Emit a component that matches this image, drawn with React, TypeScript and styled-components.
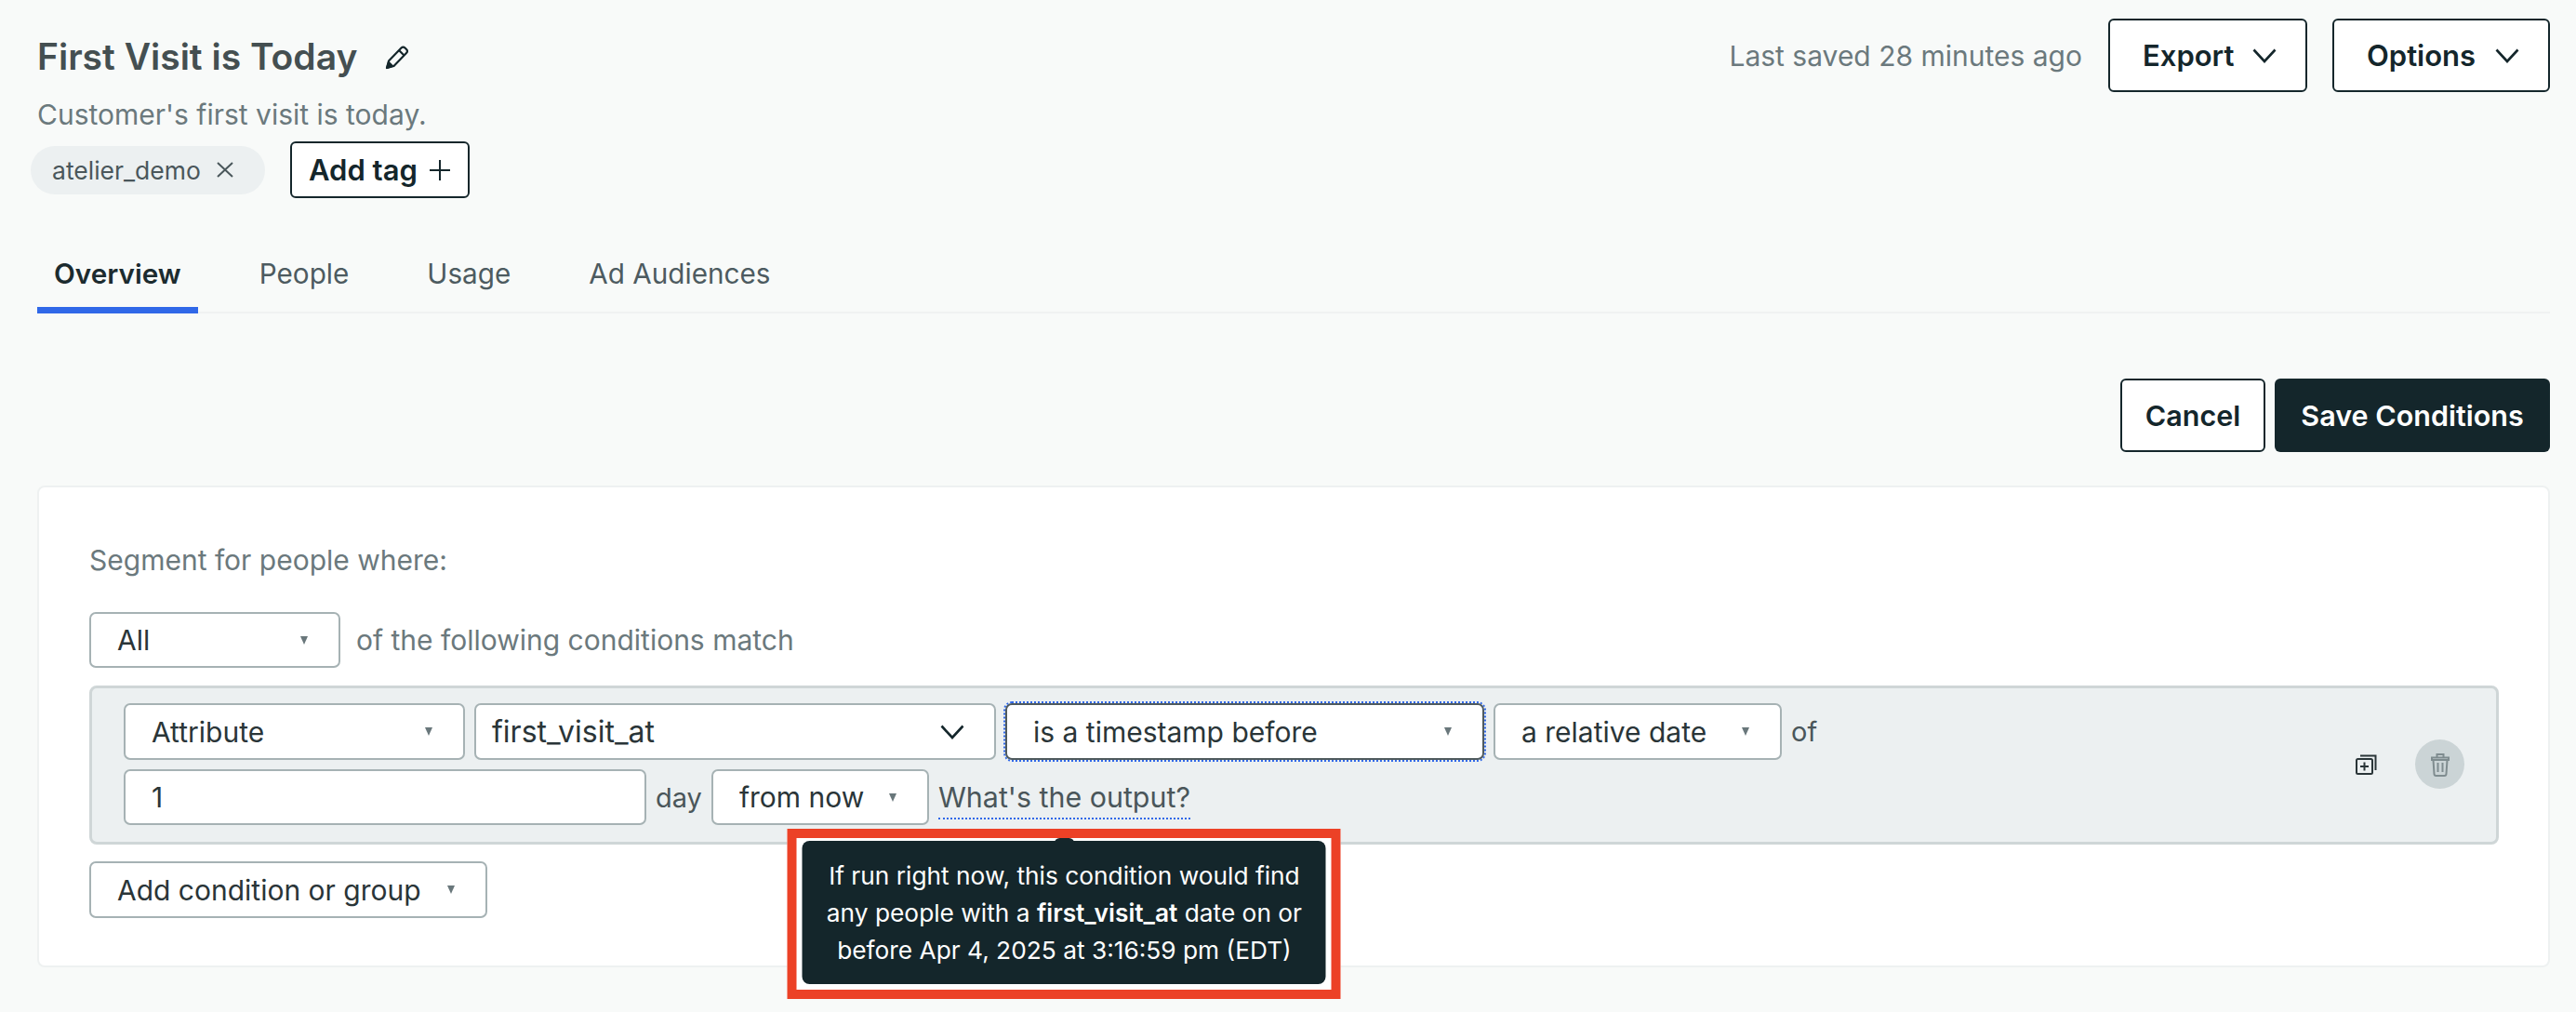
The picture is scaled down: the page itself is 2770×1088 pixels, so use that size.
import React from 'react';
import styled, { createGlobalStyle } from 'styled-components';

const GlobalStyle = createGlobalStyle`
  html, body {
    margin: 0;
    padding: 0;
    background: #f8faf9;
  }
  * {
    box-sizing: border-box;
  }
  body {
    font-family: Inter, 'Noto Sans', 'Liberation Sans', sans-serif;
    color: #2a3538;
  }
`;

const Page = styled.div`
  width: 2770px;
  height: 1088px;
  padding: 20px 28px 0 40px;
`;

const Header = styled.header`
  display: flex;
  justify-content: space-between;
  align-items: flex-start;
`;

const HeaderLeft = styled.div`
  padding-top: 16px;
`;

const TitleRow = styled.div`
  display: flex;
  align-items: center;
  gap: 30px;
  height: 50px;
`;

const Title = styled.h1`
  margin: 0;
  font-size: 39px;
  line-height: 50px;
  font-weight: 600;
  color: #444f51;
`;

const Description = styled.p`
  margin: 15px 0 0;
  font-size: 30px;
  line-height: 44px;
  color: #6b797d;
`;

const TagRow = styled.div`
  display: flex;
  align-items: center;
  gap: 27px;
  margin: 7px 0 0 -7px;
`;

const Tag = styled.span`
  display: inline-flex;
  align-items: center;
  justify-content: space-between;
  width: 252px;
  height: 52px;
  padding: 0 34px 0 23px;
  border-radius: 26px;
  background: #ecf0f1;
  font-size: 26.5px;
  color: #4a575b;
`;

const OutlineButton = styled.button<{ $w: number; $h?: number }>`
  display: inline-flex;
  align-items: center;
  justify-content: space-between;
  width: ${p => p.$w}px;
  height: ${p => p.$h ?? 79}px;
  padding: 0 31px 0 35px;
  background: #fff;
  border: 2px solid #14262b;
  border-radius: 6px;
  font-family: inherit;
  font-size: 31px;
  font-weight: 600;
  color: #14262b;
`;

const AddTag = styled(OutlineButton)`
  padding: 0 19px 0 18px;
`;

const HeaderRight = styled.div`
  display: flex;
  align-items: center;
  gap: 27px;
`;

const Saved = styled.span`
  font-size: 30px;
  color: #6b797d;
  margin-right: 1px;
`;

const Tabs = styled.nav`
  display: flex;
  gap: 48px;
  margin-top: 61px;
  border-bottom: 2px solid #f0f2f2;
`;

const Tab = styled.div<{ $active?: boolean }>`
  height: 63px;
  margin-bottom: -2px;
  padding: 0 18px;
  font-size: 29.7px;
  line-height: 40px;
  font-weight: ${p => (p.$active ? 600 : 400)};
  color: ${p => (p.$active ? '#1c2b2f' : '#4d5b60')};
  border-bottom: 7px solid ${p => (p.$active ? '#3068e8' : 'transparent')};
`;

const Actions = styled.div`
  display: flex;
  justify-content: flex-end;
  gap: 10px;
  margin-top: 70px;
`;

const CancelButton = styled(OutlineButton)`
  justify-content: center;
  padding: 0;
  font-size: 30.5px;
`;

const SaveButton = styled.button`
  width: 296px;
  height: 79px;
  border: none;
  border-radius: 6px;
  background: #14262b;
  color: #fff;
  font-family: inherit;
  font-size: 30.5px;
  font-weight: 600;
`;

const Card = styled.section`
  margin-top: 36px;
  padding: 56px 53px 51px 54px;
  background: #fff;
  border: 2px solid #eef1f1;
  border-radius: 8px;
`;

const Muted = styled.div`
  font-size: 30px;
  line-height: 44px;
  color: #6b797d;
`;

const MatchRow = styled.div`
  display: flex;
  align-items: center;
  gap: 17px;
  margin-top: 34px;
`;

const SelectBox = styled.div<{ $w: number; $h?: number; $focus?: boolean; $plain?: boolean }>`
  flex: none;
  display: flex;
  align-items: center;
  justify-content: space-between;
  width: ${p => p.$w}px;
  height: ${p => p.$h ?? 61}px;
  padding: 0 ${p => (p.$plain ? 32 : 33)}px 0 ${p => (p.$plain ? 17 : 28)}px;
  background: #fff;
  border: 2px solid ${p => (p.$focus ? '#4f5a5d' : '#a6b2b4')};
  border-radius: 7px;
  font-size: ${p => (p.$plain ? 32 : 30)}px;
  color: #2a3538;
  outline: ${p => (p.$focus ? '2px dotted #3068e8' : 'none')};
`;

const Caret = styled.span`
  width: 0;
  height: 0;
  border-left: 4.5px solid transparent;
  border-right: 4.5px solid transparent;
  border-top: 9px solid #69777b;
`;

const ConditionBox = styled.div`
  display: flex;
  align-items: center;
  justify-content: space-between;
  height: 171px;
  margin-top: 19px;
  padding: 16px 34px 18px 34px;
  background: #ecf0f1;
  border: 3px solid #cfd6d7;
  border-radius: 8px;
`;

const ConditionRows = styled.div`
  display: flex;
  flex-direction: column;
  gap: 10px;
`;

const ConditionRow = styled.div`
  display: flex;
  align-items: center;
  gap: 10px;
`;

const ValueInput = styled.input`
  width: 562px;
  height: 60px;
  padding: 0 28px;
  background: #fff;
  border: 2px solid #a6b2b4;
  border-radius: 7px;
  font-family: inherit;
  font-size: 30px;
  color: #2a3538;
`;

const InlineText = styled.span`
  font-size: 29px;
  color: #4a565a;
`;

const OutputLink = styled.span`
  position: relative;
  display: inline-block;
  margin-top: 2px;
  font-size: 30.4px;
  line-height: 44px;
  color: #4a565a;
  border-bottom: 2px dotted #3068e8;
`;

const TooltipFrame = styled.div`
  position: absolute;
  top: calc(100% + 12px);
  left: 50%;
  transform: translateX(-50%);
  width: 595px;
  height: 183px;
  padding: 3px 6px 6px;
  background: #fff;
  border: 10px solid #ec4126;
`;

const Tooltip = styled.div`
  position: relative;
  height: 154px;
  padding: 18px 0;
  background: #14262b;
  border-radius: 8px;
  color: #fff;
  font-size: 26.3px;
  line-height: 40px;
  text-align: center;

  &::before {
    content: '';
    position: absolute;
    top: -3px;
    left: 271px;
    width: 22px;
    height: 6px;
    background: #14262b;
    border-radius: 6px 6px 0 0;
  }

  b {
    font-weight: 600;
  }
`;

const RowActions = styled.div`
  display: flex;
  align-items: center;
  gap: 41px;
`;

const TrashCircle = styled.div`
  display: flex;
  align-items: center;
  justify-content: center;
  width: 53px;
  height: 53px;
  border-radius: 50%;
  background: #cbd4d6;
`;

const AddRow = styled.div`
  margin-top: 18px;
`;

const Chevron = () => (
  <svg width="26" height="16" viewBox="0 0 26 16" fill="none" stroke="#14262b" strokeWidth="2.6">
    <path d="M1.5 1.5 13 14 24.5 1.5" />
  </svg>
);

const Pencil = () => (
  <svg width="26" height="27" viewBox="0 0 26 27" fill="none" stroke="#14262b" strokeWidth="2.2" strokeLinejoin="round">
    <path d="M2 25 4 17.5 17.5 3.5q2-2 4 0l1.5 1.5q2 2 0 4L9.5 23Z" />
    <path d="M15 6 20.5 11.5" />
    <path d="M2 25 4 19 8 23Z" fill="#14262b" />
  </svg>
);

const CloseX = () => (
  <svg width="18" height="17" viewBox="0 0 18 17" stroke="#4a575b" strokeWidth="2">
    <path d="M1 1 17 16M17 1 1 16" />
  </svg>
);

const Plus = () => (
  <svg width="22" height="24" viewBox="0 0 22 24" stroke="#14262b" strokeWidth="2">
    <path d="M11 1V23M0 12H22" />
  </svg>
);

const DuplicateIcon = () => (
  <svg width="23" height="22" viewBox="0 0 23 22" fill="none" stroke="#2a3538" strokeWidth="2">
    <rect x="1" y="5" width="17" height="16" rx="1.5" />
    <path d="M5 1.5H21.5V17" />
    <path d="M9.5 8.5V17.5M5 13H14" />
  </svg>
);

const TrashIcon = () => (
  <svg width="20" height="26" viewBox="0 0 20 26" fill="none" stroke="#7f8c8f" strokeWidth="2">
    <path d="M1 5.5H19V8H1Z" />
    <path d="M6.5 5V2H13.5V5" />
    <path d="M2.5 8 3.5 23Q3.6 25 5.5 25H14.5Q16.4 25 16.5 23L17.5 8" />
    <path d="M7.5 11V21M12.5 11V21" />
  </svg>
);

const App = () => {
  return (
    <Page>
      <GlobalStyle />
      <Header>
        <HeaderLeft>
          <TitleRow>
            <Title>First Visit is Today</Title>
            <Pencil />
          </TitleRow>
          <Description>Customer's first visit is today.</Description>
          <TagRow>
            <Tag>
              atelier_demo
              <CloseX />
            </Tag>
            <AddTag $w={193} $h={61}>
              Add tag
              <Plus />
            </AddTag>
          </TagRow>
        </HeaderLeft>
        <HeaderRight>
          <Saved>Last saved 28 minutes ago</Saved>
          <OutlineButton $w={214}>
            Export
            <Chevron />
          </OutlineButton>
          <OutlineButton $w={234}>
            Options
            <Chevron />
          </OutlineButton>
        </HeaderRight>
      </Header>

      <Tabs>
        <Tab $active>Overview</Tab>
        <Tab>People</Tab>
        <Tab>Usage</Tab>
        <Tab>Ad Audiences</Tab>
      </Tabs>

      <Actions>
        <CancelButton $w={156}>Cancel</CancelButton>
        <SaveButton>Save Conditions</SaveButton>
      </Actions>

      <Card>
        <Muted>Segment for people where:</Muted>
        <MatchRow>
          <SelectBox $w={270} $h={60}>
            All
            <Caret />
          </SelectBox>
          <Muted>of the following conditions match</Muted>
        </MatchRow>

        <ConditionBox>
          <ConditionRows>
            <ConditionRow>
              <SelectBox $w={367}>
                Attribute
                <Caret />
              </SelectBox>
              <SelectBox $w={561} $plain>
                first_visit_at
                <Chevron />
              </SelectBox>
              <SelectBox $w={515} $focus>
                is a timestamp before
                <Caret />
              </SelectBox>
              <SelectBox $w={310}>
                a relative date
                <Caret />
              </SelectBox>
              <InlineText>of</InlineText>
            </ConditionRow>
            <ConditionRow>
              <ValueInput readOnly value="1" />
              <InlineText>day</InlineText>
              <SelectBox $w={234} $h={60}>
                from now
                <Caret />
              </SelectBox>
              <OutputLink>
                What's the output?
                <TooltipFrame>
                  <Tooltip>
                    If run right now, this condition would find
                    <br />
                    any people with a <b>first_visit_at</b> date on or
                    <br />
                    before Apr 4, 2025 at 3:16:59 pm (EDT)
                  </Tooltip>
                </TooltipFrame>
              </OutputLink>
            </ConditionRow>
          </ConditionRows>
          <RowActions>
            <DuplicateIcon />
            <TrashCircle>
              <TrashIcon />
            </TrashCircle>
          </RowActions>
        </ConditionBox>

        <AddRow>
          <SelectBox $w={428}>
            Add condition or group
            <Caret />
          </SelectBox>
        </AddRow>
      </Card>
    </Page>
  );
};

export default App;
